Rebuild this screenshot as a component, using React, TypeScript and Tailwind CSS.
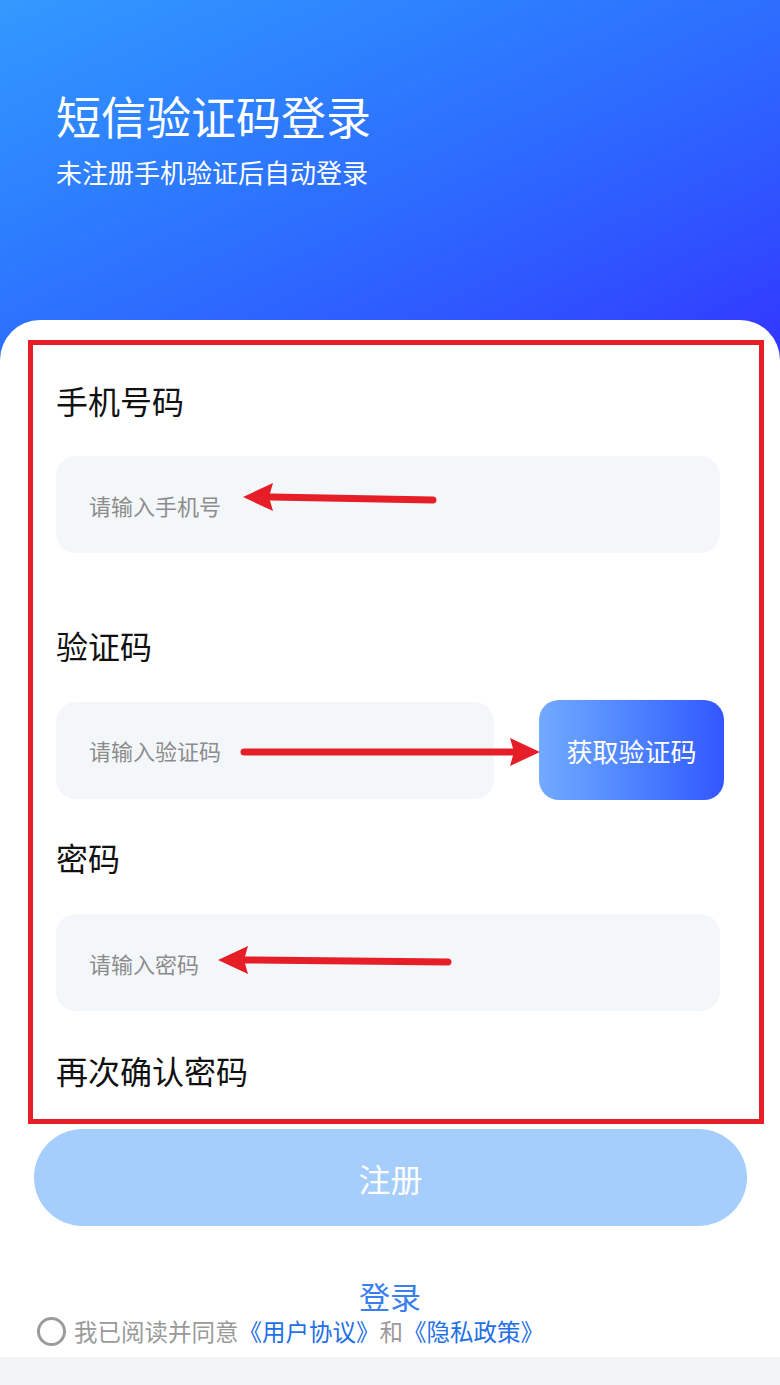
import { FC } from "react";

const FONT = { fontFamily: '"Noto Sans CJK SC", "Noto Sans", sans-serif' };

const Arrow: FC<{ x1: number; x2: number; y1: number; y2: number }> = ({ x1, x2, y1, y2 }) => {
  // tip is at x2,y2; head drawn as triangle
  const dir = x2 > x1 ? 1 : -1;
  const back = x2 - dir * 30;
  return (
    <svg className="absolute left-0 top-0 pointer-events-none" width={780} height={1385}>
      <line x1={x1} y1={y1} x2={back + dir * 2} y2={y2} stroke="#e61e28" strokeWidth={7} strokeLinecap="round" />
      <polygon points={`${x2},${y2} ${back},${y2 - 14} ${back + dir * 4},${y2} ${back},${y2 + 14}`} fill="#e61e28" />
    </svg>
  );
};

const Field: FC<{ placeholder: string; className?: string }> = ({ placeholder, className = "" }) => (
  <input
    readOnly
    placeholder={placeholder}
    className={`h-[97px] rounded-[20px] bg-[#f4f7fa] pl-[33px] text-[22px] outline-none placeholder:text-[#8c8c8c] ${className}`}
  />
);

const App: FC = () => {
  return (
    <div className="relative w-[780px] h-[1385px] overflow-hidden bg-white" style={FONT}>
      {/* header */}
      <div className="h-[360px] bg-linear-to-br from-[#3399ff] to-[#3333ff] pl-[56px] pt-[86px] text-white">
        <div className="text-[45px] leading-[60px]">短信验证码登录</div>
        <div className="mt-[8px] text-[26px] leading-[36px]">未注册手机验证后自动登录</div>
      </div>

      {/* card */}
      <div className="relative -mt-[40px] rounded-t-[40px] bg-white">
        <div className="pl-[56px] pr-[60px] pt-[59px]">
          <div className="text-[32px] leading-[42px] text-[#111]">手机号码</div>
          <Field placeholder="请输入手机号" className="mt-[35px] w-full" />

          <div className="mt-[71px] text-[32px] leading-[42px] text-[#111]">验证码</div>
          <div className="mt-[34px] flex items-center justify-between -mr-[4px]">
            <Field placeholder="请输入验证码" className="w-[438px]" />
            <button className="h-[100px] w-[185px] rounded-[20px] bg-linear-to-r from-[#72aaff] to-[#3355ff] text-[26px] text-white">
              获取验证码
            </button>
          </div>

          <div className="mt-[36px] text-[32px] leading-[42px] text-[#111]">密码</div>
          <Field placeholder="请输入密码" className="mt-[36px] w-full" />

          <div className="mt-[38px] text-[32px] leading-[42px] text-[#111]">再次确认密码</div>
        </div>

        <div className="pl-[34px] pr-[33px] pt-[38px]">
          <button className="h-[97px] w-full rounded-full bg-[#a6cefc] text-[32px] text-white">注册</button>
        </div>

        <div className="mt-[54px] text-center text-[31px] leading-[32px] text-[#3a7ff0]">登录</div>

        <div className="mt-[5px] flex h-[28px] items-center pl-[37px]">
          <span className="h-[29px] w-[29px] shrink-0 rounded-full border-[3px] border-[#9b9b9b]" />
          <span className="ml-[8px] text-[23.5px] leading-[28px] text-[#9a9a9a]">
            我已阅读并同意
            <span className="text-[#1f6fe6]">《用户协议》</span>和
            <span className="text-[#1f6fe6]">《隐私政策》</span>
          </span>
        </div>

        <div className="mt-[12px] h-[40px] bg-[#f2f3f5]" />
      </div>

      {/* annotations */}
      <div className="absolute left-[28px] top-[340px] h-[784px] w-[736px] border-[5px] border-[#e61e28] pointer-events-none" />
      <Arrow x1={433} y1={500} x2={243} y2={497} />
      <Arrow x1={244} y1={752} x2={540} y2={752} />
      <Arrow x1={448} y1={962} x2={218} y2={960} />
    </div>
  );
};

export default App;
